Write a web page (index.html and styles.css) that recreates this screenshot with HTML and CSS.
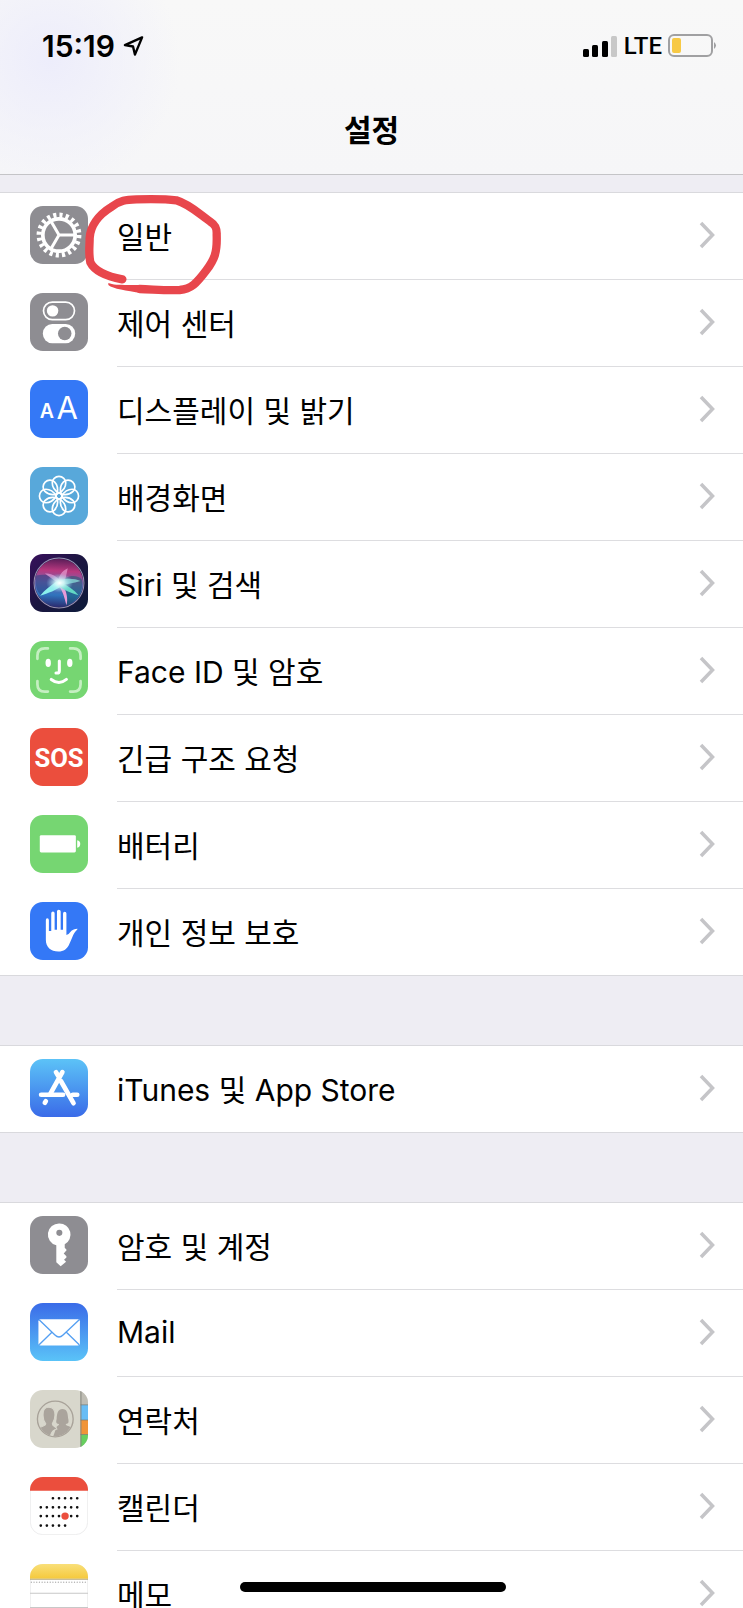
FILE: index.html
```html
<!DOCTYPE html>
<html lang="ko">
<head>
  <meta charset="UTF-8">
  <meta name="viewport" content="width=device-width, initial-scale=1">
  <title>설정</title>
  <link rel="stylesheet" href="styles.css">
</head>
<body>

  <svg class="defs" aria-hidden="true">
    <symbol id="chevron" viewBox="0 0 16 28">
      <path d="M2 2 L13.500 14 L2 26" fill="none" stroke="#c5c5c8" stroke-width="3.500"/>
    </symbol>
    <linearGradient id="storeBg" x1="0" y1="0" x2="0" y2="1">
      <stop offset="0" stop-color="#5cc3f7"/>
      <stop offset="1" stop-color="#3a6be8"/>
    </linearGradient>
    <linearGradient id="mailBg" x1="0" y1="0" x2="0" y2="1">
      <stop offset="0" stop-color="#3a6be8"/>
      <stop offset="1" stop-color="#5ac3f8"/>
    </linearGradient>
    <linearGradient id="memoBg" x1="0" y1="0" x2="0" y2="1">
      <stop offset="0" stop-color="#f9df79"/>
      <stop offset="1" stop-color="#f5c93c"/>
    </linearGradient>
    <linearGradient id="siriBg" x1="0" y1="0" x2="1" y2="1">
      <stop offset="0" stop-color="#38105c"/>
      <stop offset="0.500" stop-color="#1b1640"/>
      <stop offset="1" stop-color="#0d1b3a"/>
    </linearGradient>
    <linearGradient id="siriOrb" x1="0.500" y1="0" x2="0.450" y2="1">
      <stop offset="0" stop-color="#5a1d58"/>
      <stop offset="0.250" stop-color="#b8387f"/>
      <stop offset="0.500" stop-color="#6f68b0"/>
      <stop offset="0.750" stop-color="#2f74bd"/>
      <stop offset="1" stop-color="#2b2a6e"/>
    </linearGradient>
    <radialGradient id="siriGlow">
      <stop offset="0" stop-color="#fff"/>
      <stop offset="0.350" stop-color="#d5f8f8" stop-opacity="0.850"/>
      <stop offset="1" stop-color="#8fd8f0" stop-opacity="0"/>
    </radialGradient>
  </svg>

  <div class="screen">
    <header class="header">
      <div class="status">
        <div class="status-left">
          <span class="time">15:19</span>
          <svg class="location" viewBox="0 0 22 22">
            <path d="M20 2 L2 10 L10.500 11.500 L12.500 20 Z" fill="none" stroke="#000" stroke-width="2.500" stroke-linejoin="round"/>
          </svg>
        </div>
        <div class="status-right">
          <svg class="signal" viewBox="0 0 35 23">
            <rect x="0" y="14" width="6" height="8" rx="1.500"/>
            <rect x="9" y="10" width="6" height="12" rx="1.500"/>
            <rect x="19" y="6" width="6" height="16" rx="1.500"/>
            <rect x="28" y="1" width="6" height="21" rx="1.500" fill="#c8c8c8"/>
          </svg>
          <span class="network">LTE</span>
          <svg class="battery" viewBox="0 0 49 24">
            <rect x="1" y="1" width="43" height="21" rx="5" fill="none" stroke="#a0a0a2" stroke-width="2"/>
            <rect x="4" y="4" width="9" height="15" rx="2" fill="#f7c945"/>
            <path d="M46 8 Q50 11.500 46 15 Z" fill="#a0a0a2"/>
          </svg>
        </div>
      </div>
      <h1 class="title">설정</h1>
    </header>

    <main>
      <ul class="group group-first">
        <li class="row">
          <a class="link" href="#general">
            <svg class="icon" viewBox="0 0 172 172">
              <rect width="172" height="172" rx="38" fill="#8e8d92"/>
              <g fill="none" stroke="#fff">
                <circle cx="86" cy="86" r="59" stroke-width="15" pathLength="40" stroke-dasharray="1 1"/>
                <circle cx="86" cy="86" r="48" stroke-width="11"/>
                <path d="M86 86 H135 M86 86 L61 43 M86 86 L61 129" stroke-width="9"/>
              </g>
            </svg>
            <span class="label">일반</span>
            <svg class="chevron"><use href="#chevron"/></svg>
          </a>
          <svg class="marker" viewBox="250 40 420 312">
            <path d="M368 299 C320 290 284 272 272 248 C266 220 270 200 270 175 C272 140 296 106 335 82 C360 62 380 60 410 59 C450 58 500 58 530 62 C570 74 600 104 632 126 C648 136 652 146 651 165 C653 220 644 240 620 272 C590 312 575 328 540 331 C500 333 460 329 420 328" fill="none" stroke="#e8464c" stroke-width="25" stroke-linecap="round" stroke-linejoin="round"/>
            <path d="M326 310 C345 318 380 315 425 316 L425 340 C380 333 340 328 326 316 Z" fill="#e8464c"/>
          </svg>
        </li>
        <li class="row">
          <a class="link" href="#control-center">
            <svg class="icon" viewBox="0 0 172 172">
              <rect width="172" height="172" rx="38" fill="#8e8d92"/>
              <rect x="40" y="27" width="92" height="52" rx="26" fill="none" stroke="#fff" stroke-width="5"/>
              <circle cx="67" cy="53" r="17" fill="#fff"/>
              <rect x="38" y="92" width="96" height="57" rx="28" fill="#fff"/>
              <circle cx="103" cy="120" r="20" fill="#8e8d92"/>
            </svg>
            <span class="label">제어 센터</span>
            <svg class="chevron"><use href="#chevron"/></svg>
          </a>
        </li>
        <li class="row">
          <a class="link" href="#display">
            <svg class="icon" viewBox="0 0 172 172">
              <rect width="172" height="172" rx="38" fill="#3478f6"/>
              <text class="icon-a" x="50" y="112" font-size="58" font-weight="600">A</text>
              <text class="icon-a" x="110" y="117" font-size="92">A</text>
            </svg>
            <span class="label">디스플레이 및 밝기</span>
            <svg class="chevron"><use href="#chevron"/></svg>
          </a>
        </li>
        <li class="row">
          <a class="link" href="#wallpaper">
            <svg class="icon" viewBox="0 0 172 172">
              <rect width="172" height="172" rx="38" fill="#58a8da"/>
              <g fill="none" stroke="#fff" stroke-width="5">
                <path id="petal" d="M86 78 C76 72 66 60 66 47 A20 19 0 0 1 106 47 C106 60 96 72 86 78 Z"/>
                <use href="#petal" transform="rotate(45 86 86)"/>
                <use href="#petal" transform="rotate(90 86 86)"/>
                <use href="#petal" transform="rotate(135 86 86)"/>
                <use href="#petal" transform="rotate(180 86 86)"/>
                <use href="#petal" transform="rotate(225 86 86)"/>
                <use href="#petal" transform="rotate(270 86 86)"/>
                <use href="#petal" transform="rotate(315 86 86)"/>
                <circle cx="86" cy="86" r="9"/>
              </g>
            </svg>
            <span class="label">배경화면</span>
            <svg class="chevron"><use href="#chevron"/></svg>
          </a>
        </li>
        <li class="row">
          <a class="link" href="#siri">
            <svg class="icon" viewBox="0 0 172 172">
              <rect width="172" height="172" rx="38" fill="url(#siriBg)"/>
              <circle cx="86" cy="86" r="72" fill="url(#siriOrb)"/>
              <path d="M86 86 C60 58 44 60 18 64 C14 90 20 112 32 122 Z" fill="#1d3d80" opacity="0.500"/>
              <path d="M86 86 C110 60 140 60 154 76 C160 110 140 140 108 152 Z" fill="#185a70" opacity="0.500"/>
              <path d="M88 88 C66 76 56 66 44 58 C66 56 80 68 94 84 Z" fill="#e0a3dc" opacity="0.700"/>
              <path d="M82 86 C84 66 94 50 112 42 C108 60 106 72 100 88 Z" fill="#e79bd0" opacity="0.700"/>
              <path d="M84 78 C110 72 130 72 150 80 C128 86 108 90 90 94 Z" fill="#8de8e0" opacity="0.700"/>
              <path d="M84 78 C62 94 44 106 30 124 C54 116 78 108 98 92 Z" fill="#8af0ec"/>
              <path d="M82 88 C98 110 102 130 108 152 C114 132 108 110 96 88 Z" fill="#e79ad9"/>
              <path d="M92 84 C112 94 130 106 144 122 C122 116 102 108 84 94 Z" fill="#62d8c4"/>
              <ellipse cx="88" cy="86" rx="40" ry="28" fill="url(#siriGlow)"/>
              <circle cx="86" cy="86" r="74" fill="none" stroke="#9a93b4" stroke-width="3"/>
            </svg>
            <span class="label">Siri 및 검색</span>
            <svg class="chevron"><use href="#chevron"/></svg>
          </a>
        </li>
        <li class="row">
          <a class="link" href="#face-id">
            <svg class="icon" viewBox="0 0 172 172">
              <rect width="172" height="172" rx="38" fill="#76d672"/>
              <g fill="none" stroke-linecap="round">
                <path d="M22 53 V44 Q22 22 44 22 H53 M119 22 H128 Q150 22 150 44 V53 M150 119 V128 Q150 150 128 150 H119 M53 150 H44 Q22 150 22 128 V119" stroke="#c5efc2" stroke-width="8"/>
                <path d="M87 59 V88 Q87 95 80 95 H77" stroke="#fff" stroke-width="9"/>
                <path d="M63 114 Q86 132 108 114" stroke="#fff" stroke-width="9"/>
              </g>
              <ellipse cx="54" cy="65" rx="8" ry="12" fill="#fff"/>
              <ellipse cx="118" cy="65" rx="8" ry="12" fill="#fff"/>
            </svg>
            <span class="label">Face ID 및 암호</span>
            <svg class="chevron"><use href="#chevron"/></svg>
          </a>
        </li>
        <li class="row">
          <a class="link" href="#sos">
            <svg class="icon" viewBox="0 0 172 172">
              <rect width="172" height="172" rx="38" fill="#eb4e3d"/>
              <text class="icon-sos" x="86" y="115">SOS</text>
            </svg>
            <span class="label">긴급 구조 요청</span>
            <svg class="chevron"><use href="#chevron"/></svg>
          </a>
        </li>
        <li class="row">
          <a class="link" href="#battery">
            <svg class="icon" viewBox="0 0 172 172">
              <rect width="172" height="172" rx="38" fill="#76d672"/>
              <rect x="29" y="60" width="107" height="51" rx="4" fill="#fff"/>
              <path d="M140 75 Q149 77 149 86 Q149 95 140 97 Z" fill="#fff"/>
            </svg>
            <span class="label">배터리</span>
            <svg class="chevron"><use href="#chevron"/></svg>
          </a>
        </li>
        <li class="row">
          <a class="link" href="#privacy">
            <svg class="icon" viewBox="0 0 172 172">
              <rect width="172" height="172" rx="38" fill="#3478f6"/>
              <path d="M47 54 Q47 48 51 48 Q56 48 56 54 V86 H63 V33 Q63 28 68 28 Q73 28 73 33 V82 H80 V28 Q80 23 85 23 Q91 23 91 28 V82 H98 V34 Q98 29 103 29 Q108 29 108 34 V98 Q114 98 119 90 Q126 79 141 79 Q141 82 136 86 C128 94 124 110 117 124 C110 140 100 147 84 147 C62 147 47 134 47 112 Z" fill="#fff"/>
            </svg>
            <span class="label">개인 정보 보호</span>
            <svg class="chevron"><use href="#chevron"/></svg>
          </a>
        </li>
      </ul>

      <ul class="group">
        <li class="row">
          <a class="link" href="#app-store">
            <svg class="icon" viewBox="0 0 172 172">
              <rect width="172" height="172" rx="38" fill="url(#storeBg)"/>
              <g fill="none" stroke="#fff" stroke-width="14" stroke-linecap="round">
                <path d="M96 39 L61 102"/>
                <path d="M77 39 L83 49"/>
                <path d="M92 66 L129 131"/>
                <path d="M33 106 H98 M127 106 H140"/>
                <path d="M47 125 L44 130"/>
              </g>
            </svg>
            <span class="label">iTunes 및 App Store</span>
            <svg class="chevron"><use href="#chevron"/></svg>
          </a>
        </li>
      </ul>

      <ul class="group">
        <li class="row">
          <a class="link" href="#passwords">
            <svg class="icon" viewBox="0 0 172 172">
              <rect width="172" height="172" rx="38" fill="#8e8d92"/>
              <path d="M87 22 A33 33 0 0 1 103 84 V94 L109 101 L100 111 L108 119 V123 L101 130 L107 136 L91 149 L78 137 V87 A33 33 0 0 1 87 22 Z" fill="#fff"/>
              <circle cx="87" cy="50" r="9" fill="#8e8d92"/>
            </svg>
            <span class="label">암호 및 계정</span>
            <svg class="chevron"><use href="#chevron"/></svg>
          </a>
        </li>
        <li class="row">
          <a class="link" href="#mail">
            <svg class="icon" viewBox="0 0 172 172">
              <rect width="172" height="172" rx="38" fill="url(#mailBg)"/>
              <rect x="25" y="48" width="123" height="78" rx="6" fill="#fff"/>
              <path d="M27 50 L74 95 Q86 107 98 95 L146 50 M27 124 L65 87 M146 124 L108 87" fill="none" stroke="#549ff2" stroke-width="4"/>
            </svg>
            <span class="label">Mail</span>
            <svg class="chevron"><use href="#chevron"/></svg>
          </a>
        </li>
        <li class="row">
          <a class="link" href="#contacts">
            <svg class="icon" viewBox="0 0 172 172">
              <clipPath id="iconClip"><rect width="172" height="172" rx="38"/></clipPath>
              <g clip-path="url(#iconClip)">
                <rect width="172" height="172" fill="#d8d7cc"/>
                <rect x="150" width="22" height="44" fill="#bfbdb4"/>
                <rect x="150" y="44" width="22" height="45" fill="#68bdf5"/>
                <rect x="150" y="89" width="22" height="43" fill="#f09438"/>
                <rect x="150" y="132" width="22" height="40" fill="#67cf5f"/>
                <path d="M151 0 V172" stroke="#85857d" stroke-width="3"/>
                <path d="M150 44 H172 M150 89 H172 M150 132 H172" stroke="#77776f" stroke-width="2"/>
                <clipPath id="faceClip"><circle cx="75" cy="86" r="51"/></clipPath>
                <g clip-path="url(#faceClip)" fill="#aaa49c">
                  <path d="M78 112 C82 104 86 106 86 101 C76 100 77 94 79 86 C80 66 84 56 96 56 C110 56 112 68 113 84 C116 96 114 101 106 101 C106 108 124 108 132 116 V140 H68 Z"/>
                  <path d="M20 118 C34 104 47 108 47 100 C40 92 38 82 39 70 C39 56 46 51 56 51 C70 51 74 60 74 74 C74 86 70 94 66 100 C66 108 78 108 80 116 C68 118 62 124 60 142 H20 Z" stroke="#d8d7cc" stroke-width="3"/>
                </g>
                <circle cx="75" cy="86" r="53" fill="none" stroke="#a8a299" stroke-width="4"/>
              </g>
            </svg>
            <span class="label">연락처</span>
            <svg class="chevron"><use href="#chevron"/></svg>
          </a>
        </li>
        <li class="row">
          <a class="link" href="#calendar">
            <svg class="icon" viewBox="0 0 172 172">
              <rect x="1" y="1" width="170" height="170" rx="37" fill="#fff" stroke="#e4e4e6" stroke-width="2"/>
              <path d="M0 41 V38 A38 38 0 0 1 38 0 H134 A38 38 0 0 1 172 38 V41 Z" fill="#eb4e3d"/>
              <path d="M68 63 H142 M32 90 H142 M32 116 H142 M32 144 H106" fill="none" stroke="#111" stroke-width="8" stroke-linecap="round" stroke-dasharray="0 18"/>
              <circle cx="104" cy="116" r="11" fill="#eb4e3d"/>
            </svg>
            <span class="label">캘린더</span>
            <svg class="chevron"><use href="#chevron"/></svg>
          </a>
        </li>
        <li class="row">
          <a class="link" href="#notes">
            <svg class="icon" viewBox="0 0 172 172">
              <rect x="1" y="1" width="170" height="170" rx="37" fill="#fff" stroke="#e4e4e6" stroke-width="2"/>
              <path d="M0 44 V38 A38 38 0 0 1 38 0 H134 A38 38 0 0 1 172 38 V44 Z" fill="url(#memoBg)"/>
              <path d="M0 45 H172" stroke="#b5a678" stroke-width="3"/>
              <path d="M4 54 H172" stroke="#b0b0b0" stroke-width="4" stroke-linecap="round" stroke-dasharray="0 8"/>
              <path d="M0 87 H172 M0 129 H172" stroke="#c8c8c8" stroke-width="3"/>
            </svg>
            <span class="label">메모</span>
            <svg class="chevron"><use href="#chevron"/></svg>
          </a>
        </li>
      </ul>
    </main>

    <div class="home-bar"></div>
  </div>

</body>
</html>
```
FILE: styles.css
```css
* {
  box-sizing: border-box;
}

body {
  margin: 0;
  background-color: #eeedf3;
  color: #000;
  font-family: Inter, "Noto Sans CJK KR", sans-serif;
}

.defs {
  position: absolute;
  width: 0;
  height: 0;
}

.screen {
  position: relative;
  height: 100vh;
  overflow: hidden;
}

.header {
  height: 175px;
  border-bottom: 1px solid #c4c4c7;
  background: radial-gradient(circle at 50px 60px, #ededfb, rgba(247, 247, 247, 0) 130px), linear-gradient(#f8f8f8, #f6f6f8);
}

.status {
  display: flex;
  justify-content: space-between;
  align-items: center;
  height: 92px;
  padding: 0 26px 0 42px;
}

.status-left,
.status-right {
  display: flex;
  align-items: center;
}

.status-left {
  gap: 8px;
}

.status-right {
  gap: 6px;
}

.time {
  font-size: 30px;
  font-weight: 600;
}

.location {
  width: 21px;
  height: 22px;
}

.signal {
  width: 35px;
  height: 23px;
}

.network {
  font-family: Roboto, sans-serif;
  font-size: 24px;
  font-weight: 500;
}

.battery {
  width: 49px;
  height: 24px;
}

.title {
  margin: 0;
  font-size: 30px;
  line-height: 76px;
  font-weight: 600;
  text-align: center;
}

.group {
  margin: 0 0 69px;
  padding: 0;
  list-style: none;
  background-color: #fff;
  border-top: 1px solid #d9d9dd;
}

.group-first {
  margin-top: 17px;
}

.row {
  position: relative;
}

.link {
  display: grid;
  grid-template-columns: 58px 1fr;
  column-gap: 29px;
  align-items: center;
  height: 87px;
  padding-left: 30px;
  color: inherit;
  text-decoration: none;
}

.icon {
  display: block;
  width: 58px;
  height: 58px;
  margin-bottom: 3px;
}

.icon-a {
  fill: #fff;
  font-family: Inter, sans-serif;
  text-anchor: middle;
}

.icon-sos {
  fill: #fff;
  font-family: Roboto, sans-serif;
  font-size: 76px;
  font-weight: 700;
  text-anchor: middle;
}

/* label and chevron share the cell so the divider runs to the edge */
.label {
  display: flex;
  align-items: center;
  grid-area: 1 / 2;
  height: 87px;
  padding-bottom: 3px;
  border-bottom: 1px solid #dddde0;
  font-size: 30px;
}

.row:last-child .label {
  border-bottom: none;
}

.row:last-child .link {
  border-bottom: 1px solid #d9d9dd;
}

.chevron {
  grid-area: 1 / 2;
  justify-self: end;
  width: 16px;
  height: 28px;
  margin: 0 28px 3px 0;
}

/* hand-drawn ring round the first item */
.marker {
  position: absolute;
  z-index: 1;
  top: 0;
  left: 83px;
  width: 140px;
  height: 104px;
  pointer-events: none;
}

.home-bar {
  position: absolute;
  bottom: 16px;
  left: 50%;
  width: 266px;
  height: 10px;
  margin-left: -132px;
  border-radius: 5px;
  background-color: #000;
}
```
